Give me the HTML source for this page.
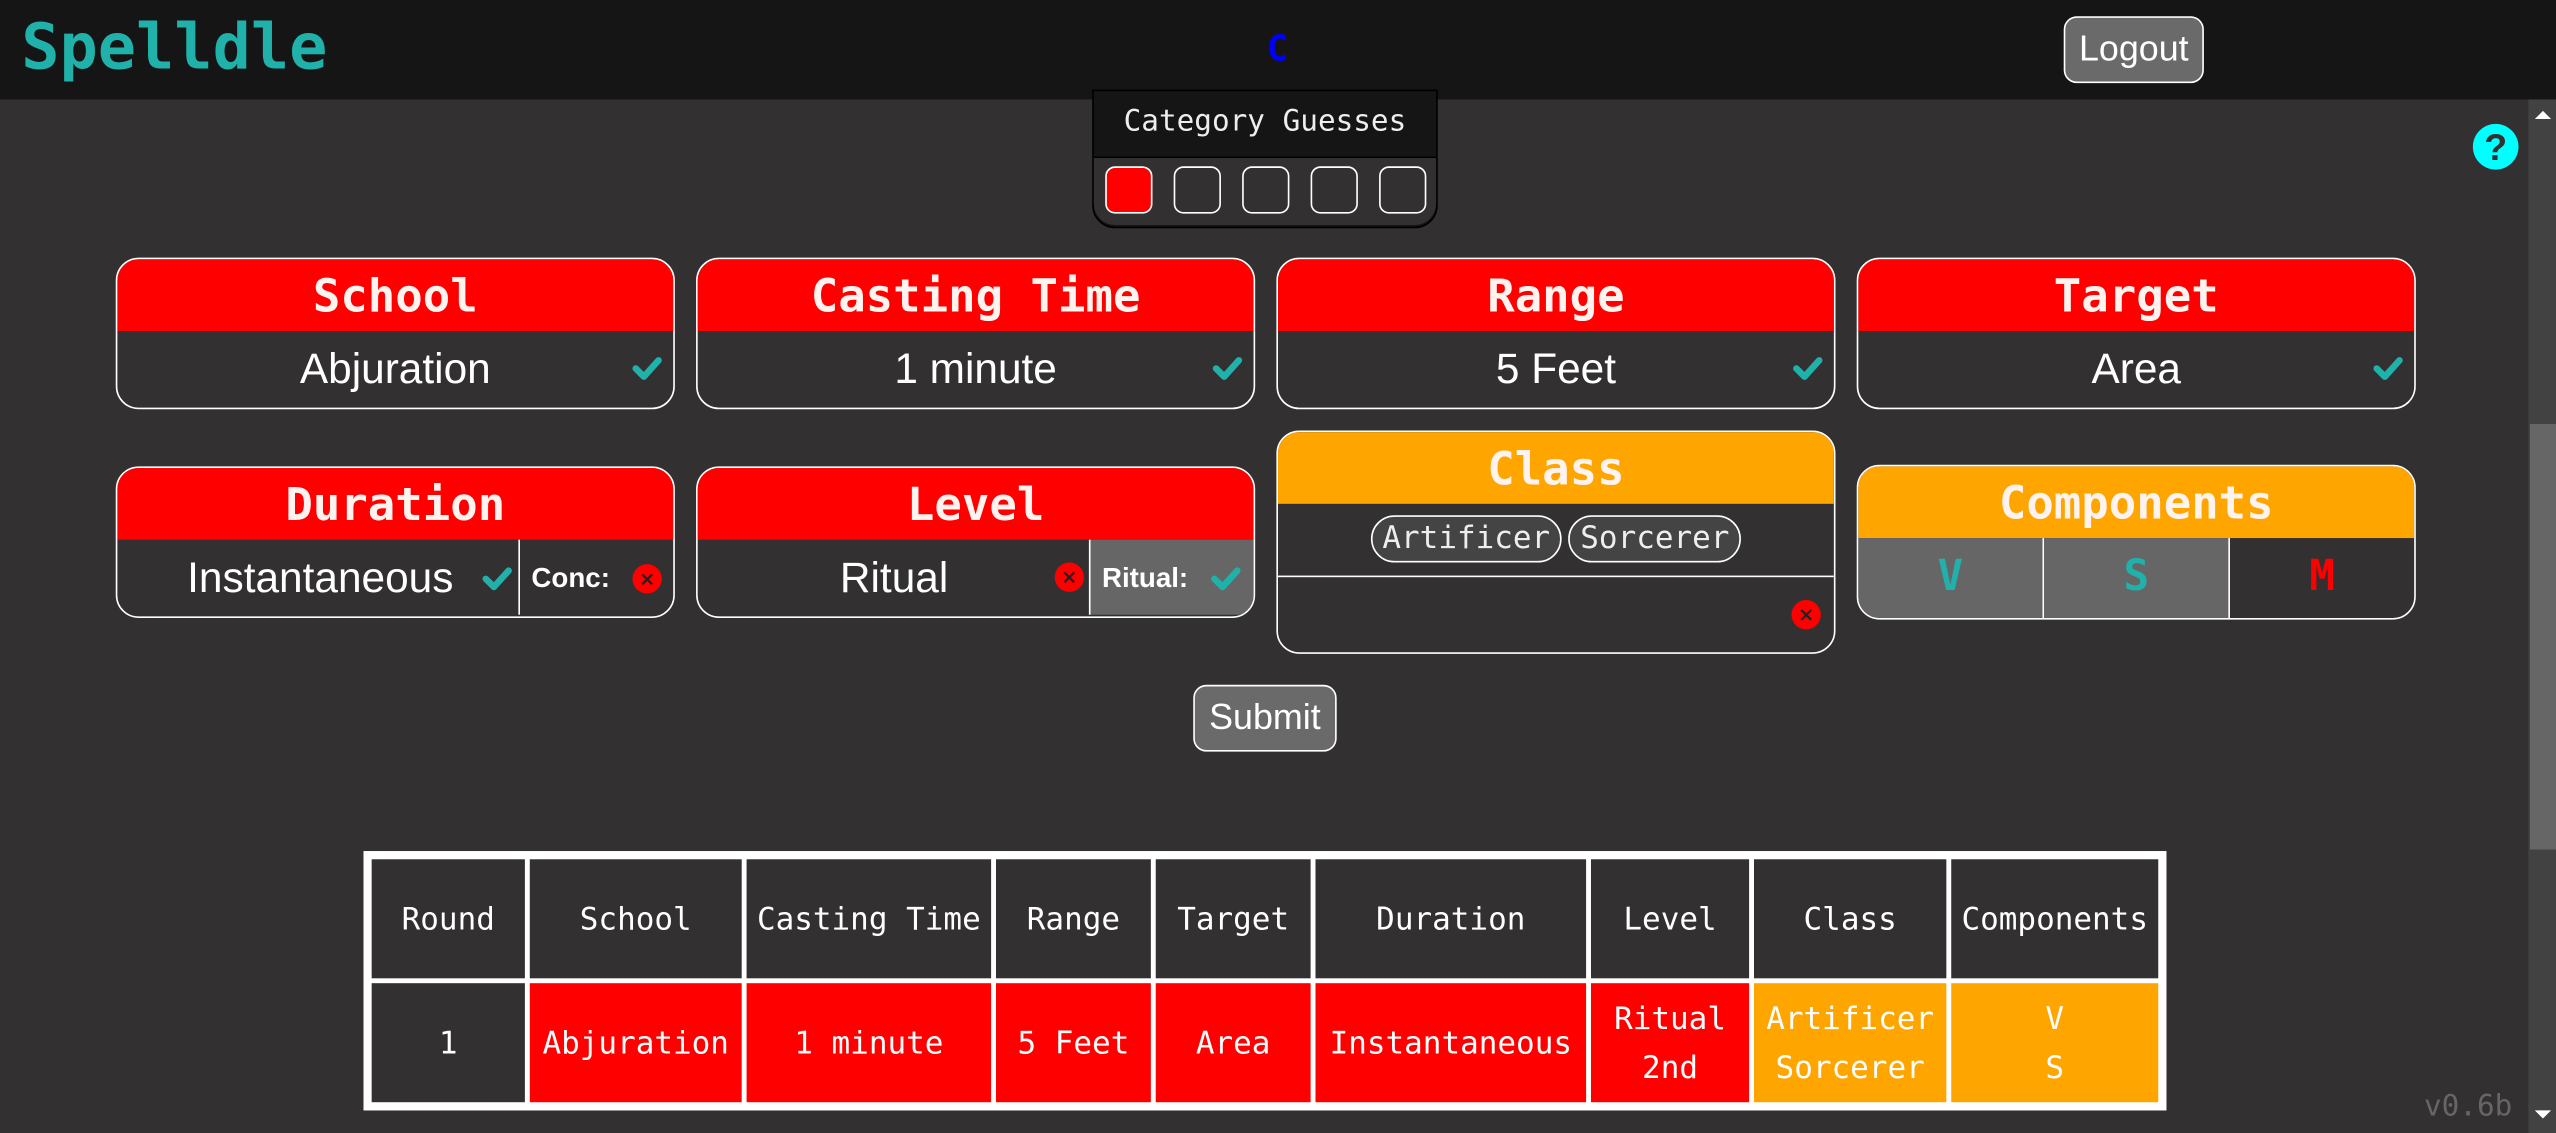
<!DOCTYPE html>
<html><head><meta charset="utf-8"><style>
html,body{margin:0;padding:0;width:2556px;height:1133px;overflow:hidden;background:#323031}
#w{position:absolute;left:0;top:0;width:1568px;height:695px;transform:scale(1.6301,1.6305);transform-origin:0 0;background:#323031;font-family:"Liberation Sans",sans-serif;color:#fff}
.a{position:absolute;box-sizing:border-box}
.mono{font-family:"DejaVu Sans Mono","Liberation Mono",monospace}
.card{position:absolute;width:343px;border:1.5px solid #fff;border-radius:14px;overflow:hidden;background:#323031;box-sizing:border-box}
.hd{height:44px;background:#f00;color:#fff3f0;font-family:"DejaVu Sans Mono",monospace;font-weight:bold;font-size:28px;text-align:center;line-height:46px}
.or{background:#ffa500}
.bd{height:46px;position:relative;font-size:26px;text-align:center;line-height:46px}
.chk{position:absolute;width:20px;height:16px}
.xc{position:absolute;width:18px;height:18px;border-radius:50%;background:#f00;color:#222;font-size:12px;line-height:18px;text-align:center;font-family:"DejaVu Sans",sans-serif;font-weight:bold}
.sq{position:absolute;top:44px;width:29px;height:29px;border:1.5px solid #fff;border-radius:6px;box-sizing:border-box}
table{position:absolute;left:223px;top:522px;border:2px solid #fff;border-collapse:separate;border-spacing:3px;background:#fff;font-family:"DejaVu Sans Mono",monospace;font-size:19px;color:#fff}
td{background:#323031;text-align:center;padding:0;height:73px;line-height:30px}
td.r{background:#f00}td.o{background:#ffa500}
.chip{display:inline-block;border:1.5px solid #fff;border-radius:16px;background:#444;font-family:"DejaVu Sans Mono",monospace;font-size:19px;padding:0 6px;line-height:27px;color:#eee}
</style></head><body><div id="w">
<div class="a" style="left:0;top:0;width:1568px;height:61px;background:#161516"></div>
<div class="a mono" style="left:13px;top:7px;font-size:39px;font-weight:bold;color:#20b2aa">Spelldle</div>
<div class="a mono" style="left:777px;top:18px;font-size:22px;font-weight:bold;color:#00f">C</div>
<div class="a" style="left:1266px;top:10px;width:86px;height:41px;background:#6a6a6a;border:1.5px solid #fff;border-radius:8px;font-size:22px;text-align:center;line-height:38px">Logout</div>
<div class="a" style="left:1551px;top:61px;width:17px;height:634px;background:#424242"></div>
<div class="a" style="left:1552px;top:260px;width:16px;height:261px;background:#666"></div>
<div class="a" style="left:1555px;top:68px;width:0;height:0;border-left:5px solid transparent;border-right:5px solid transparent;border-bottom:5px solid #fff"></div>
<div class="a" style="left:1555px;top:681px;width:0;height:0;border-left:5px solid transparent;border-right:5px solid transparent;border-top:5px solid #fff"></div>
<div class="a" style="left:1517px;top:76px;width:28px;height:28px;border-radius:50%;background:#0ff;color:#323031;font-weight:bold;font-size:23px;text-align:center;line-height:29px">?</div>
<div class="a" style="left:670px;top:55px;width:212px;height:85px;background:#161516;border:1.5px solid #000;border-radius:0 0 14px 14px"></div>
<div class="a" style="left:671px;top:96px;width:210px;height:42px;background:#323031;border-top:1.5px solid #000;border-radius:0 0 13px 13px"></div>
<div class="a mono" style="left:670px;top:64px;width:212px;text-align:center;font-size:18px;color:#eee">Category Guesses</div>
<div class="a" style="left:670px;top:58px;width:212px;height:80px">
<div class="sq" style="left:8px;background:#f00"></div><div class="sq" style="left:50px"></div><div class="sq" style="left:92px"></div><div class="sq" style="left:134px"></div><div class="sq" style="left:176px"></div></div>

<svg width="0" height="0" style="position:absolute"><defs><symbol id="ck" viewBox="0 0 20 16"><polyline points="3,8 8,13 17,3" fill="none" stroke="#20b2aa" stroke-width="4" stroke-linecap="round" stroke-linejoin="round"/></symbol></defs></svg>

<div class="card" style="left:71px;top:158px;height:93px"><div class="hd">School</div><div class="bd">Abjuration<svg class="chk" style="right:6px;top:15px"><use href="#ck"/></svg></div></div>
<div class="card" style="left:427px;top:158px;height:93px"><div class="hd">Casting Time</div><div class="bd">1 minute<svg class="chk" style="right:6px;top:15px"><use href="#ck"/></svg></div></div>
<div class="card" style="left:783px;top:158px;height:93px"><div class="hd">Range</div><div class="bd">5 Feet<svg class="chk" style="right:6px;top:15px"><use href="#ck"/></svg></div></div>
<div class="card" style="left:1139px;top:158px;height:93px"><div class="hd">Target</div><div class="bd">Area<svg class="chk" style="right:6px;top:15px"><use href="#ck"/></svg></div></div>

<div class="card" style="left:71px;top:286px;height:93px"><div class="hd">Duration</div><div class="bd">
<div class="a" style="left:0;top:0;width:247px;height:46px;text-align:center;padding-left:2px">Instantaneous</div><svg class="chk" style="left:223px;top:16px"><use href="#ck"/></svg>
<div class="a" style="left:246px;top:0;width:96px;height:46px;border-left:1.5px solid #fff;font-size:17px;font-weight:bold;text-align:left;padding-left:7px;line-height:48px">Conc:</div><div class="xc" style="left:316px;top:15px">×</div></div></div>
<div class="card" style="left:427px;top:286px;height:93px"><div class="hd">Level</div><div class="bd">
<div class="a" style="left:0;top:0;width:241px;height:46px;text-align:center">Ritual</div><div class="xc" style="left:219px;top:14px">×</div>
<div class="a" style="left:240px;top:0;width:102px;height:46px;background:#666;border-left:1.5px solid #fff;font-size:17px;font-weight:bold;text-align:left;padding-left:7px;line-height:48px">Ritual:</div><svg class="chk" style="left:314px;top:16px"><use href="#ck"/></svg></div></div>
<div class="card" style="left:783px;top:264px;height:137px"><div class="hd or">Class</div>
<div style="height:44px;text-align:center;line-height:46px;border-bottom:1.5px solid #fff"><span class="chip">Artificer</span> <span class="chip">Sorcerer</span></div>
<div class="xc" style="left:315px;top:103px">×</div></div>
<div class="card" style="left:1139px;top:285px;height:95px"><div class="hd or">Components</div>
<div style="display:flex;height:49px;font-family:'DejaVu Sans Mono',monospace;font-size:26px;font-weight:bold;line-height:49px;text-align:center">
<div style="flex:1;background:#666;color:#20b2aa;border-right:1.5px solid #fff">V</div><div style="flex:1;background:#666;color:#20b2aa;border-right:1.5px solid #fff">S</div><div style="flex:1;color:#f00">M</div></div></div>

<div class="a" style="left:732px;top:420px;width:88px;height:41px;background:#6a6a6a;border:1.5px solid #fff;border-radius:8px;font-size:22px;text-align:center;line-height:38px">Submit</div>

<table><tr>
<td style="width:94px">Round</td><td style="width:130px">School</td><td style="width:150px">Casting Time</td><td style="width:95px">Range</td><td style="width:95px">Target</td><td style="width:166px">Duration</td><td style="width:97px">Level</td><td style="width:118px">Class</td><td style="width:127px">Components</td></tr>
<tr><td>1</td><td class="r">Abjuration</td><td class="r">1 minute</td><td class="r">5 Feet</td><td class="r">Area</td><td class="r">Instantaneous</td><td class="r">Ritual<br>2nd</td><td class="o">Artificer<br>Sorcerer</td><td class="o">V<br>S</td></tr></table>

<div class="a mono" style="left:1487px;top:668px;font-size:18px;color:#666">v0.6b</div>
</div></body></html>
